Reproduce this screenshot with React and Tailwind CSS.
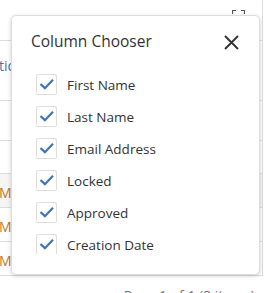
import React from "react";

const items = ["First Name", "Last Name", "Email Address", "Locked", "Approved", "Creation Date"];

function Check() {
  return (
    <div className="w-[21px] h-[21px] shrink-0 border border-[#dddddd] rounded-[2px] bg-white flex items-center justify-center">
      <svg width="15" height="15" viewBox="0 0 15 15" fill="none">
        <path d="M2.3 7.8 L5.9 11.2 L13.2 3.6" stroke="#3b77c2" strokeWidth="2.3" strokeLinecap="square" strokeLinejoin="miter" />
      </svg>
    </div>
  );
}

export default function App() {
  return (
    <div className="relative w-[264px] h-[293px] overflow-hidden bg-white text-[#333] font-['Open_Sans',sans-serif]">
      <div className="w-[263px] border-r border-[#dddddd]">
        <div className="h-[40px] flex justify-end pt-[10px] pr-[17px]">
          <svg width="13" height="13" viewBox="0 0 13 13" fill="none" stroke="#555" strokeWidth="1.2">
            <path d="M0.5 4 V0.5 H4 M9 0.5 H12.5 V4 M12.5 9 V12.5 H9 M4 12.5 H0.5 V9" />
          </svg>
        </div>
        <div className="h-[60px] border-t border-[#dddddd] flex items-center text-[14px] text-[#3f74b8] leading-none pb-[10px]">
          <span className="-ml-[1px]">tion Date</span>
        </div>
        <div className="h-[40px] border-t border-[#dddddd]" />
        <div className="h-[33px] border-t border-[#dddddd]" />
        <div className="h-[34px] border-t border-[#dddddd] bg-[#f5f5f5] flex items-center text-[14px] text-[#c1762e] pt-[3px]">
          <span className="-ml-[1px]">M</span>
        </div>
        <div className="h-[34px] border-t border-[#dddddd] flex items-center text-[14px] text-[#c1762e] pt-[3px]">
          <span className="-ml-[1px]">M</span>
        </div>
        <div className="h-[35px] border-t border-b border-[#dddddd] flex items-center text-[14px] text-[#c1762e] pt-[3px]">
          <span className="-ml-[1px]">M</span>
        </div>
      </div>
      <div className="flex justify-end pr-[9px] pt-[10px] text-[14px] leading-[20px] text-[#777]">
        Page 1 of 1 (3 items)
      </div>

      <div className="absolute left-[11px] top-[15px] w-[249px] h-[260px] bg-white border border-[#dddddd] rounded-[5px] shadow-[0_1px_4px_rgba(0,0,0,0.18)] flex flex-col">
        <div className="h-[52px] flex items-center justify-between pl-[19px] pr-[20px]">
          <span className="text-[15.5px] text-[#333]">Column Chooser</span>
          <svg width="15" height="15" viewBox="0 0 15 15" stroke="#333" strokeWidth="1.9">
            <path d="M1 1 L14 14 M14 1 L1 14" />
          </svg>
        </div>
        <div className="h-[186px] overflow-hidden pl-[24px] pt-[6px] flex flex-col gap-[11px]">
          {items.map((t) => (
            <div key={t} className="flex items-center gap-[10px] h-[21px]">
              <Check />
              <span className="text-[13.5px] text-[#333] pt-[1px]">{t}</span>
            </div>
          ))}
        </div>
      </div>
    </div>
  );
}
